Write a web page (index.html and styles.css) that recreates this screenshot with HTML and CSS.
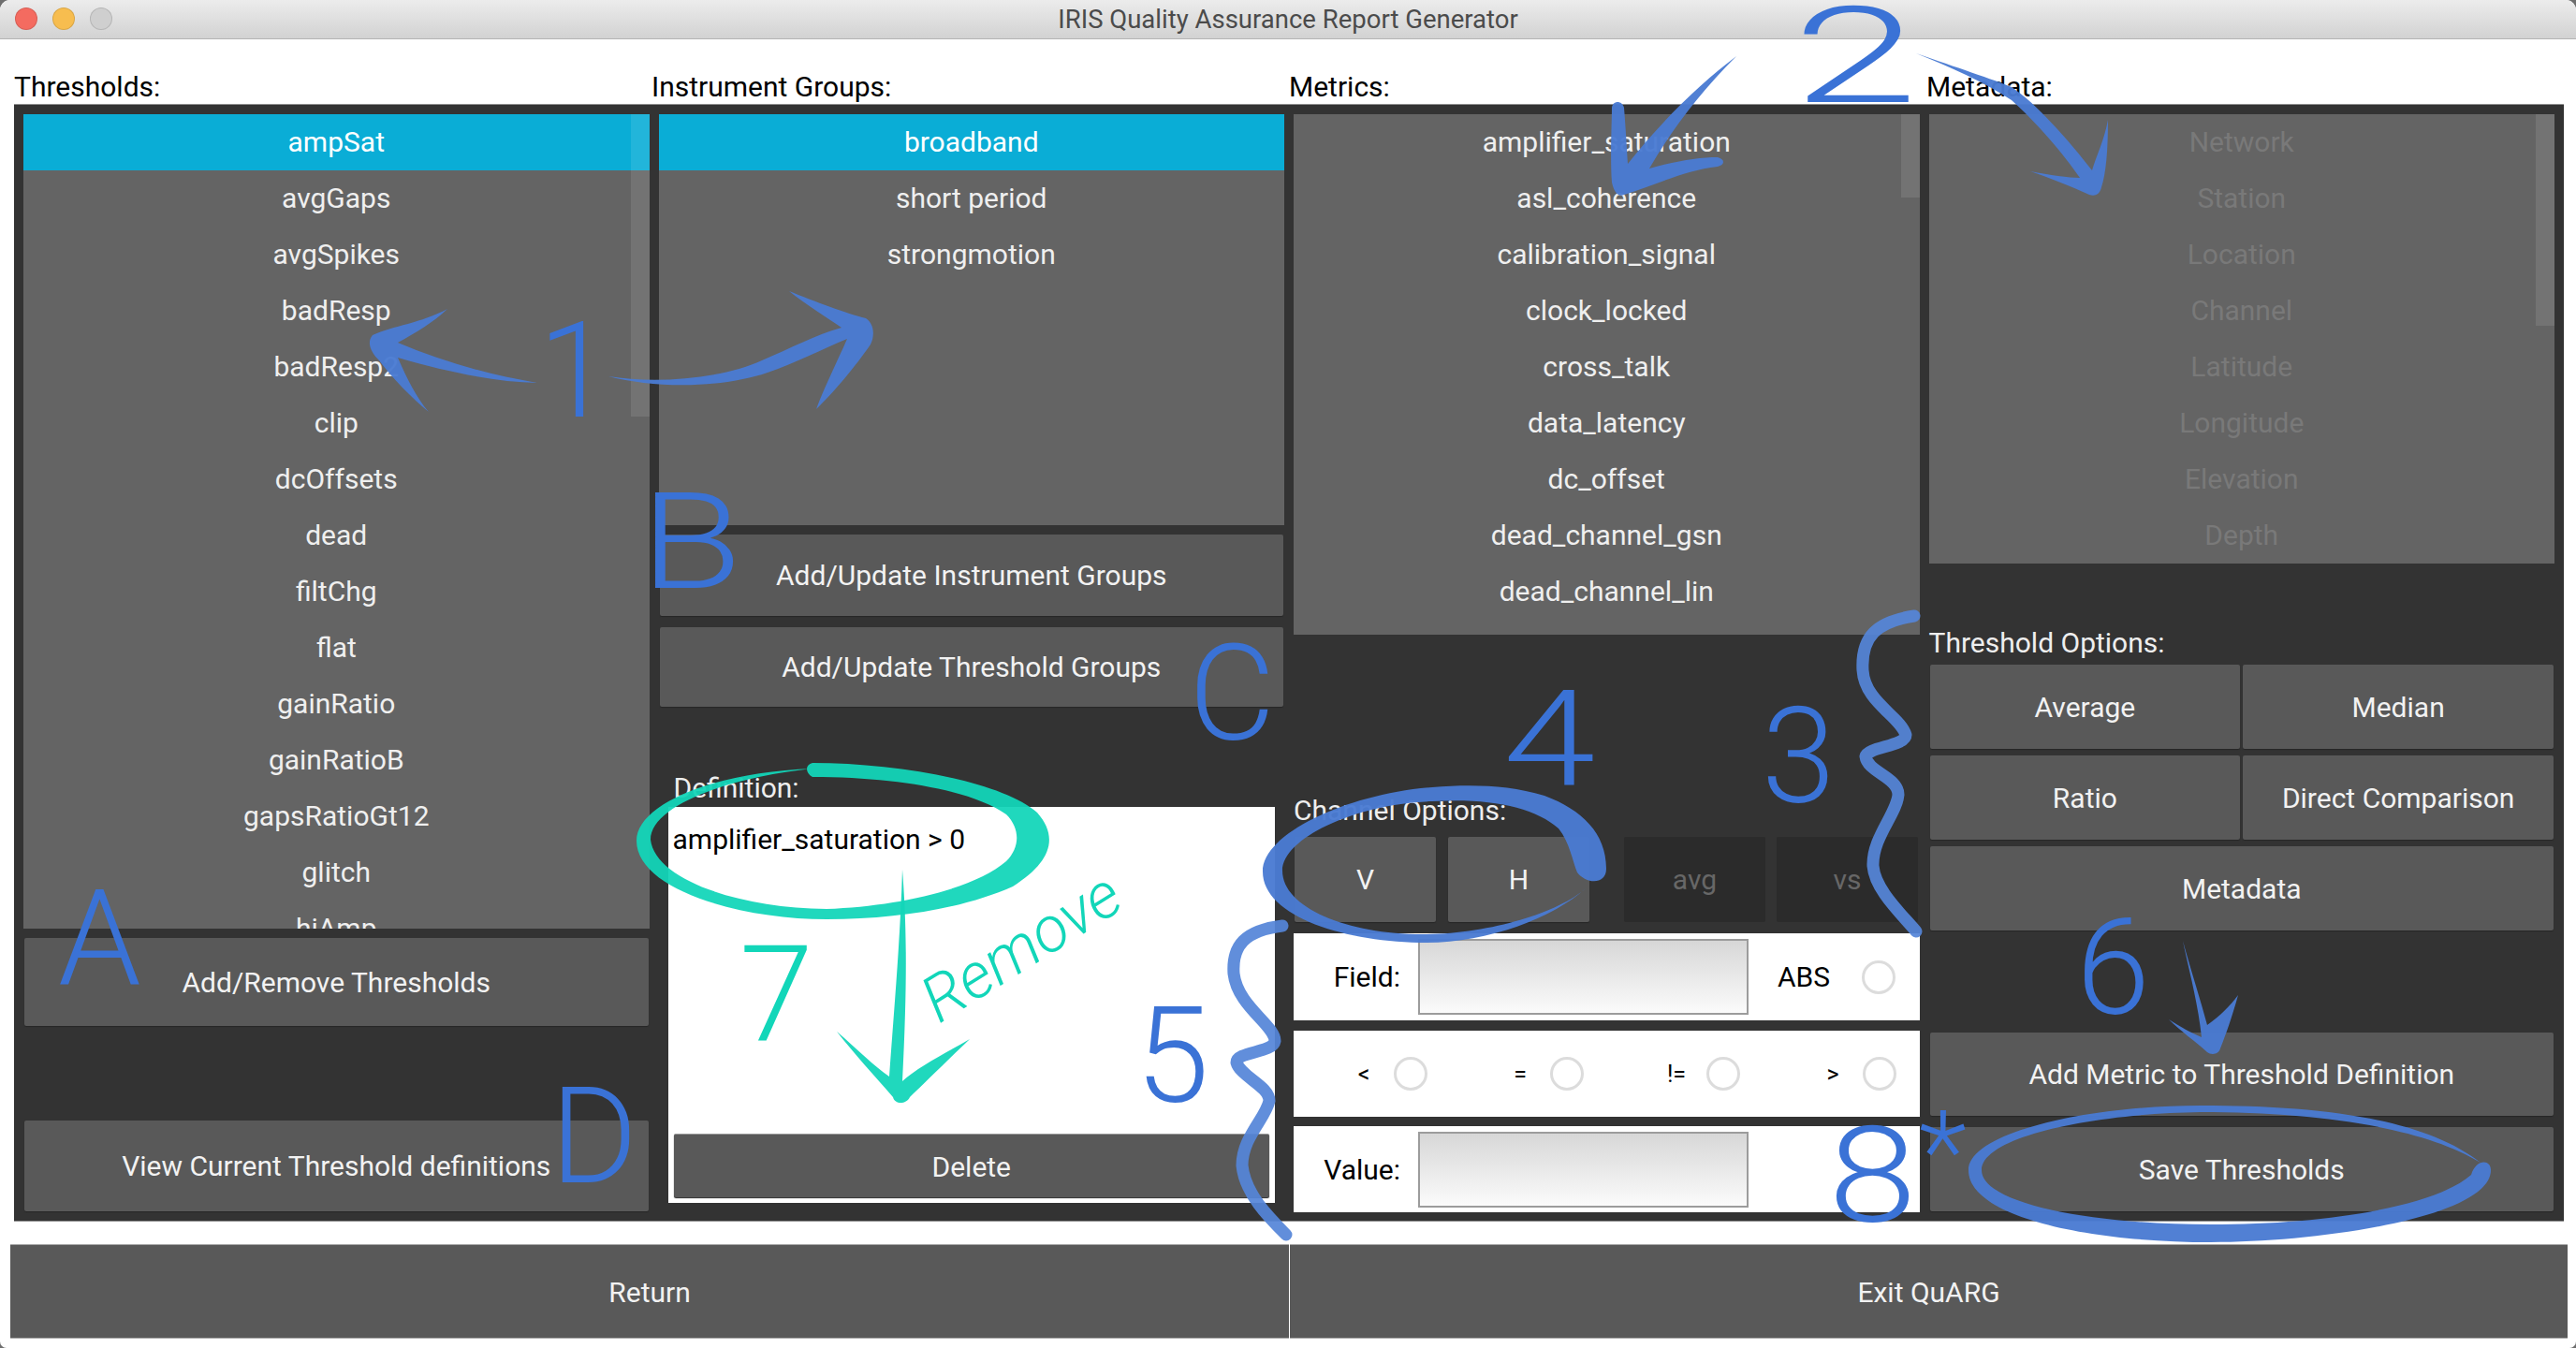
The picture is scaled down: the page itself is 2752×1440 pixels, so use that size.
FILE: index.html
```html
<!DOCTYPE html>
<html lang="en">
<head>
<meta charset="utf-8">
<title>IRIS Quality Assurance Report Generator</title>
<link rel="stylesheet" href="styles.css">
</head>
<body>
<div class="window">
  <header class="titlebar">
    <div class="lights"><span class="light red"></span><span class="light amber"></span><span class="light grey"></span></div>
    <div class="title">IRIS Quality Assurance Report Generator</div>
  </header>
  <div class="labels">
    <div>Thresholds:</div><div>Instrument Groups:</div><div>Metrics:</div><div>Metadata:</div>
  </div>
  <main class="panel">
    <section class="col">
      <div class="list list-thresholds">
        <div class="item selected">ampSat</div><div class="item">avgGaps</div><div class="item">avgSpikes</div><div class="item">badResp</div><div class="item">badResp2</div><div class="item">clip</div><div class="item">dcOffsets</div><div class="item">dead</div><div class="item">filtChg</div><div class="item">flat</div><div class="item">gainRatio</div><div class="item">gainRatioB</div><div class="item">gapsRatioGt12</div><div class="item">glitch</div><div class="item">hiAmp</div>
        <div class="scroll scroll-thresholds"></div>
      </div>
      <button class="btn btn-add-remove">Add/Remove Thresholds</button>
      <button class="btn btn-view">View Current Threshold definitions</button>
    </section>
    <section class="col">
      <div class="list list-groups">
        <div class="item selected">broadband</div><div class="item">short period</div><div class="item">strongmotion</div>
      </div>
      <button class="btn btn-group-a">Add/Update Instrument Groups</button>
      <button class="btn btn-group-b">Add/Update Threshold Groups</button>
      <div class="def-label">Definition:</div>
      <div class="def-box">
        <div class="def-text">amplifier_saturation &gt; 0</div>
        <button class="btn btn-delete">Delete</button>
      </div>
    </section>
    <section class="col">
      <div class="list list-metrics">
        <div class="item">amplifier_saturation</div><div class="item">asl_coherence</div><div class="item">calibration_signal</div><div class="item">clock_locked</div><div class="item">cross_talk</div><div class="item">data_latency</div><div class="item">dc_offset</div><div class="item">dead_channel_gsn</div><div class="item">dead_channel_lin</div>
        <div class="scroll scroll-metrics"></div>
      </div>
      <div class="channel-label">Channel Options:</div>
      <div class="channel-row">
        <button class="btn btn-ch">V</button>
        <button class="btn btn-ch">H</button>
        <button class="btn btn-ch disabled">avg</button>
        <button class="btn btn-ch disabled">vs</button>
      </div>
      <div class="row row-field">
        <span class="field-label">Field:</span><span class="input"></span><span class="abs">ABS</span><span class="radio radio-abs"></span>
      </div>
      <div class="row row-ops">
        <div class="op"><span class="op-label">&lt;</span><span class="radio"></span></div>
        <div class="op"><span class="op-label">=</span><span class="radio"></span></div>
        <div class="op"><span class="op-label">!=</span><span class="radio"></span></div>
        <div class="op"><span class="op-label">&gt;</span><span class="radio"></span></div>
      </div>
      <div class="row row-value">
        <span class="field-label">Value:</span><span class="input"></span>
      </div>
    </section>
    <section class="col">
      <div class="list list-meta">
        <div class="item muted">Network</div><div class="item muted">Station</div><div class="item muted">Location</div><div class="item muted">Channel</div><div class="item muted">Latitude</div><div class="item muted">Longitude</div><div class="item muted">Elevation</div><div class="item muted">Depth</div>
        <div class="scroll scroll-meta"></div>
      </div>
      <div class="options-label">Threshold Options:</div>
      <div class="options">
        <button class="btn btn-opt">Average</button>
        <button class="btn btn-opt">Median</button>
        <button class="btn btn-opt">Ratio</button>
        <button class="btn btn-opt">Direct Comparison</button>
        <button class="btn btn-opt span-2">Metadata</button>
      </div>
      <button class="btn btn-add-metric">Add Metric to Threshold Definition</button>
      <button class="btn btn-save">Save Thresholds</button>
    </section>
  </main>
  <footer class="bottom">
    <button class="btn-bottom">Return</button>
    <button class="btn-bottom">Exit QuARG</button>
  </footer>

  <svg class="marks" width="2752" height="1440" viewBox="0 0 2752 1440" aria-hidden="true">
    <path class="brush" d="M398 358C420 348 450 345 478 330C462 345 445 355 425 366C470 385 520 400 574 409C530 408 480 398 425 382C435 405 445 425 458 440C440 425 420 405 405 385C395 375 392 365 398 358Z"/>
    <path class="brush" d="M650 402C700 410 770 405 814 385C845 372 870 358 899 350C885 340 860 325 843 311C870 322 905 335 925 340C935 347 934 360 930 368C915 390 890 420 872 437C880 415 895 385 905 362C880 372 850 388 820 398C770 415 700 415 650 402Z"/>
    <path class="brush" d="M1855 60C1815 100 1785 140 1762 180C1790 172 1815 168 1835 168C1843 170 1843 176 1835 178C1800 182 1770 197 1735 208C1730 210 1725 208 1722 195C1720 170 1722 130 1722 115C1723 107 1733 107 1735 115C1737 140 1738 160 1739 175C1770 135 1815 90 1855 60Z"/>
    <path class="brush" d="M2047 57C2090 72 2130 85 2149 93C2175 110 2210 150 2235 182C2240 165 2248 150 2252 128C2252 160 2250 185 2245 200C2243 208 2238 210 2232 208C2215 200 2190 190 2169 183C2190 187 2210 190 2222 190C2205 165 2175 130 2149 107C2120 88 2085 72 2047 57Z"/>
    <path class="brush" d="M2332 1005C2340 1035 2350 1065 2358 1095C2372 1085 2382 1075 2391 1063C2385 1085 2378 1105 2372 1120C2370 1127 2362 1127 2358 1124C2345 1112 2330 1102 2317 1089C2330 1097 2340 1103 2352 1108C2348 1070 2338 1035 2332 1005Z"/>
    <path class="brush" d="M1716 928C1716 890 1690 865 1650 850C1610 838 1570 838 1530 841C1440 848 1349 890 1349 931C1349 980 1440 1007 1524 1007C1590 1007 1660 980 1694 949C1665 975 1590 998 1520 998C1440 998 1370 970 1370 930C1370 895 1450 858 1530 856C1590 852 1640 862 1665 885C1677 900 1680 920 1685 932C1695 945 1716 945 1716 928Z"/>
    <path class="brush" d="M2661 1250C2661 1300 2480 1327 2362 1327C2230 1327 2103 1300 2103 1250C2103 1210 2230 1181 2351 1181C2480 1181 2590 1195 2650 1242C2590 1205 2480 1188 2351 1188C2230 1190 2117 1215 2117 1250C2117 1285 2230 1308 2362 1308C2480 1308 2600 1290 2640 1255C2645 1238 2661 1238 2661 1250Z"/>
    <path class="brace" d="M2045 658C2005 664 1988 680 1990 716C1992 750 2030 765 2036 785C2036 797 1995 798 1993 808C1995 825 2028 830 2028 849C2026 870 2000 895 2001 925C2003 950 2030 975 2047 995"/>
    <path class="brace" d="M1370 989C1330 994 1316 1010 1318 1040C1322 1075 1362 1095 1362 1112C1360 1125 1321 1123 1321 1135C1325 1150 1356 1160 1356 1176C1352 1195 1327 1215 1327 1245C1330 1275 1355 1300 1374 1319"/>
    <path class="teal" d="M868 815C960 815 1070 835 1108 868C1132 895 1122 922 1082 947C1030 970 960 982 883 982C790 982 680 950 680 898C680 860 760 825 868 821C780 830 695 860 695 897C700 940 790 970 883 971C960 968 1040 950 1075 920C1090 905 1090 885 1075 870C1040 845 960 830 868 830C860 825 860 817 868 815Z"/>
    <path class="teal" d="M964 929C968 980 970 1040 964 1155C980 1140 1010 1125 1036 1110C1015 1130 990 1155 972 1172C968 1180 956 1180 954 1172C935 1150 912 1125 894 1102C915 1120 935 1140 950 1150C955 1080 962 1000 964 929Z"/>
    <text class="hand" x="575" y="445">1</text>
    <text class="hand" transform="translate(1915 109) scale(1.7 1)">2</text>
    <text class="hand" x="1882" y="857">3</text>
    <text class="hand" transform="translate(1606 839) scale(1.25 1)">4</text>
    <text class="hand" x="1213" y="1177">5</text>
    <text class="hand" x="2218" y="1083">6</text>
    <text class="hand teal-text" x="790" y="1112">7</text>
    <text class="hand" transform="translate(1953 1305) scale(1.2 1)">8</text>
    <text class="hand star" x="2050" y="1272">*</text>
    <text class="hand" x="62" y="1052">A</text>
    <text class="hand" transform="translate(684 628) scale(1.25 1)">B</text>
    <text class="hand" x="1270" y="790">C</text>
    <text class="hand" x="588" y="1263">D</text>
    <text class="remove" transform="translate(1003 1094) rotate(-32)">Remove</text>
  </svg>
</div>
</body>
</html>
```
FILE: styles.css
```css
* { box-sizing: border-box; }
html, body { margin: 0; padding: 0; background: #6e6e6e; }
body { font-family: Roboto, "Liberation Sans", sans-serif; font-size: 30px; }
button { font: inherit; border: 0; padding: 0; }

.window { position: relative; width: 2752px; height: 1440px; overflow: hidden; background: #fff; border-radius: 11px 11px 7px 7px; }

.titlebar { position: relative; height: 42px; display: flex; align-items: center; justify-content: center;
  background: linear-gradient(#ececec, #d2d2d2); border-bottom: 1px solid #b4b4b4; }
.lights { position: absolute; left: 16px; top: 8px; display: flex; gap: 16px; }
.light { width: 24px; height: 24px; border-radius: 50%; border: 1px solid rgba(0,0,0,.12); }
.red { background: #f46b60; }
.amber { background: #f7bd4f; }
.grey { background: #cfcfcf; }
.title { font-size: 27.5px; color: #4b4b4b; }

.labels { height: 69px; padding: 33px 13px 0 15px; display: grid; grid-template-columns: repeat(4, 681px);
  color: #000; line-height: 36px; }

.panel { margin-left: 15px; width: 2724px; height: 1194px; padding: 10px 10px 0; background: #333;
  border-top: 1px solid #8f8f8f; border-bottom: 1px solid #8f8f8f; display: grid; grid-template-columns: repeat(4, 1fr); column-gap: 10px; }
.col { display: flex; flex-direction: column; min-width: 0; }

.list { position: relative; flex: none; overflow: hidden; background: #646464; }
.list-thresholds { height: 870px; }
.list-groups { height: 439px; }
.list-metrics { height: 556px; }
.list-meta { height: 480px; }
.item { height: 60px; padding-bottom: 2px; display: flex; align-items: center; justify-content: center; color: #efefef; }
.item.selected { background: #0aadd6; color: #fff; }
.item.muted { color: #797979; }
.scroll { position: absolute; top: 0; right: 0; width: 20px; background: rgba(255,255,255,.1); }
.scroll-thresholds { height: 323px; }
.scroll-metrics { height: 89px; }
.scroll-meta { height: 226px; }

.btn { display: block; flex: none; background: #595959; color: #f2f2f2; border-radius: 2px;
  box-shadow: 0 1px 1px #262626; margin: 0 1px; }
.btn-add-remove { height: 94px; margin-top: 10px; }
.btn-view { height: 97px; margin-top: 101px; }
.btn-group-a { height: 87px; margin-top: 10px; }
.btn-group-b { height: 85px; margin-top: 12px; }

.def-label { margin: 66px 0 0 16px; height: 41px; line-height: 41px; color: #eee; }
.def-box { margin: 0 10px; height: 423px; background: #fff; padding: 0 6px 6px 5px; display: flex; flex-direction: column; justify-content: space-between; }
.def-text { color: #000; height: 70px; line-height: 70px; }
.btn-delete { height: 68px; margin: 0 0 0 1px; padding-top: 2px; background: #595959; border-top: 1px solid #999; }

.channel-label { margin-top: 162px; height: 54px; padding-top: 9px; line-height: 34px; color: #eee; }
.channel-row { display: flex; height: 91px; padding-left: 1px; }
.btn-ch { margin: 0; width: 151px; }
.btn-ch:nth-child(2) { margin-left: 13px; }
.btn-ch:nth-child(3) { margin-left: 37px; }
.btn-ch:nth-child(4) { margin-left: 12px; }
.btn-ch.disabled { background: #2b2b2b; color: #676767; box-shadow: none; }

.row { background: #fff; color: #000; height: 92px; margin-top: 11px; display: flex; align-items: center; }
.row-field { margin-top: 12px; height: 93px; }
.row-value { margin-top: 10px; }
.row-ops { display: grid; grid-template-columns: repeat(4, 167px); }
.field-label { width: 114px; text-align: right; flex: none; }
.input { width: 353px; height: 81px; flex: none; margin-left: 19px; border: 2px solid #9c9c9c;
  background: linear-gradient(#d7d7d7, #fbfbfb); }
.abs { margin-left: 31px; width: 57px; }
.radio { width: 36px; height: 36px; border-radius: 50%; border: 3px solid #dcdcdc; background: #fff; flex: none; }
.radio-abs { margin-left: 33px; }
.op { display: flex; align-items: center; padding-left: 50px; }
.op-label { width: 50px; text-align: center; font-size: 25px; margin-right: 7px; }

.options-label { margin-top: 68px; height: 40px; line-height: 34px; color: #eee; }
.options { display: grid; grid-template-columns: 1fr 1fr; gap: 7px 3px; padding: 0 1px; }
.btn-opt { height: 90px; margin: 0; }
.span-2 { grid-column: span 2; }
.btn-add-metric { height: 89px; margin-top: 109px; }
.btn-save { height: 90px; margin-top: 12px; }

.bottom { margin: 24px 9px 0 11px; height: 101px; display: grid; grid-template-columns: 1366px 1fr; column-gap: 1px; }
.btn-bottom { background: #595959; color: #f2f2f2; padding-top: 2px; border-top: 1px solid #a8a8a8; border-bottom: 1px solid #a8a8a8; }

.marks { position: absolute; left: 0; top: 0; pointer-events: none; }
.brush { fill: #4a7bd2; fill-opacity: .96; }
.brace { fill: none; stroke: #5585d8; stroke-opacity: .93; stroke-width: 13px; stroke-linecap: round; stroke-linejoin: round; }
.teal { fill: #12d6b9; fill-opacity: .94; }
.hand { font-family: Roboto, sans-serif; font-weight: 300; font-size: 142px; fill: #3a72d6; }
.teal-text { fill: #12d6b9; }
.star { font-size: 120px; }
.remove { font-family: Roboto, sans-serif; font-weight: 300; font-style: italic; font-size: 68px; fill: #12d6b9; }
```
